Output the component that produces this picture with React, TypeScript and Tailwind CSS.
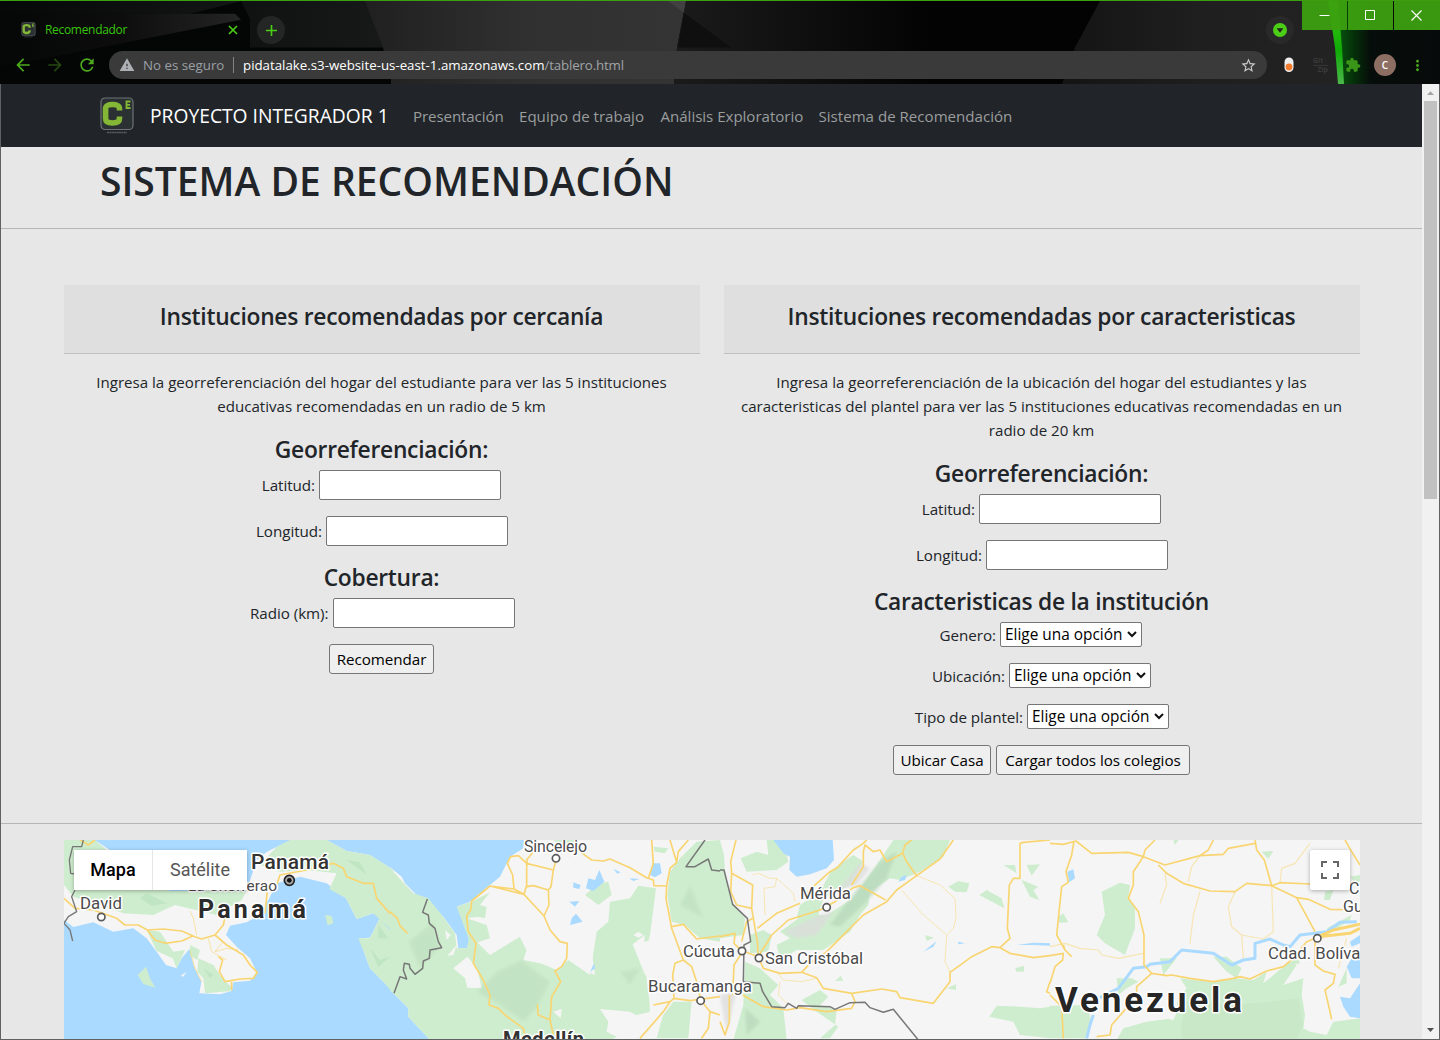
import React from "react";
import { MdArrowBack, MdArrowForward, MdRefresh, MdStarBorder, MdExtension, MdMoreVert, MdWarning, MdAdd } from "react-icons/md";

function Logo({ className }: { className: string }) {
  return (
    <svg viewBox="0 0 34 38" className={className}>
      <rect x="1" y="1" width="32" height="31.5" rx="4" fill="#2b3133" stroke="#6d7276" strokeWidth="1.2" />
      <path d="M19.500 13.500V11.500C19.500 9 17 7.500 12.500 7.500S5.600 9 5.600 11.500V21.500C5.600 24.500 8 26 12.500 26S19.500 24.500 19.500 21.500V19.500" fill="none" stroke="#83b735" strokeWidth="5.600" />
      <path d="M30.500 4.500H26.500V11H30.500M26.500 7.800H30" fill="none" stroke="#83b735" strokeWidth="1.800" />
      <path d="M7 35.500H27" stroke="#565b5f" strokeWidth="1.300" strokeDasharray="2 .4" />
    </svg>
  );
}

function Backdrop() {
  return (
    <svg className="absolute inset-0 h-full w-full" viewBox="0 0 1440 84" preserveAspectRatio="none">
      <defs>
        <linearGradient id="a" x1="0" x2="1"><stop offset="0" stopColor="#050606" /><stop offset=".5" stopColor="#0d0d0d" /><stop offset="1" stopColor="#242424" /></linearGradient>
        <linearGradient id="a2" x1="0" x2="1"><stop offset="0" stopColor="#060707" /><stop offset="1" stopColor="#141515" /></linearGradient>
        <linearGradient id="b" x1="0" x2="1"><stop offset="0" stopColor="#202020" /><stop offset=".5" stopColor="#303030" /><stop offset="1" stopColor="#343434" /></linearGradient>
        <linearGradient id="c" x1="0" x2="1"><stop offset="0" stopColor="#1b1b1b" /><stop offset=".6" stopColor="#020302" /><stop offset="1" stopColor="#020302" /></linearGradient>
        <linearGradient id="d" x1="0" x2="1"><stop offset="0" stopColor="#141414" /><stop offset=".5" stopColor="#1f1f1f" /><stop offset="1" stopColor="#232323" /></linearGradient>
        <linearGradient id="e" x1="0" x2="1"><stop offset="0" stopColor="#07570d" /><stop offset=".12" stopColor="#05380a" /><stop offset=".32" stopColor="#060d0a" /><stop offset="1" stopColor="#070a0a" /></linearGradient>
        <linearGradient id="f" x1="0" x2="0" y1="0" y2="1"><stop offset="0" stopColor="#3ecb12" /><stop offset=".6" stopColor="#10ab08" /><stop offset="1" stopColor="#4cb84a" /></linearGradient>
        <linearGradient id="g" x1="0" x2="1"><stop offset="0" stopColor="#101211" /><stop offset="1" stopColor="#171918" /></linearGradient>
      </defs>
      <rect width="1440" height="84" fill="#040505" />
      <path d="M0 0H242L190 13H0Z" fill="url(#a2)" />
      <path d="M0 13H235L241 19L0 67Z" fill="url(#a)" />
      <path d="M242 2V0H366L383 47H250V18Z" fill="url(#g)" />
      <path d="M365 0H686L677 47L674 84H391V79L383 47Z" fill="url(#b)" />
      <path d="M668 0H686L684 12Z" fill="#414141" />
      <path d="M686 0H1102V84H674L677 47Z" fill="url(#c)" />
      <path d="M684 12L731 47H678Z" fill="#0f0f0f" />
      <path d="M1100 0H1336L1342 84H1062L1075 47Z" fill="url(#d)" />
      <path d="M1338 0H1440V84H1342Z" fill="url(#e)" />
      <path d="M1328 0H1338L1342 47L1344 84H1338L1335 47Z" fill="url(#f)" />
    </svg>
  );
}

const winBtn = "flex h-[29px] items-center justify-center bg-[#3ca010]/95";

function Chrome() {
  return (
    <header className="relative h-[84px] shrink-0 overflow-hidden border-t border-[#3b9f10] bg-black">
      <Backdrop />
      <div className="relative flex h-[46px] items-start">
        <div className="flex h-[46px] w-[257px] items-center pt-[12px] pl-[21px]">
          <Logo className="h-4 w-[15px]" />
          <span className="ml-[9px] w-[183px] text-[12px] leading-4 tracking-[-0.31px] text-[#37c50b]">Recomendador</span>
          <svg viewBox="0 0 10 10" className="size-[10px]"><path d="M1 1L9 9M9 1L1 9" stroke="#4bcf16" strokeWidth="1.700" /></svg>
        </div>
        <div className="mt-[15px] flex size-7 items-center justify-center rounded-full bg-[#242525]">
          <MdAdd className="size-[19px] text-[#4bcf16]" />
        </div>
        <div className="grow" />
        <div className="mt-[15px] mr-[8px] flex size-7 items-center justify-center rounded-full bg-[#292929]">
          <svg viewBox="0 0 14 14" className="size-[14px]"><circle cx="7" cy="7" r="7" fill="#4bcf16" /><path d="M3.600 5.200H10.400L7 9.800Z" fill="#222" /></svg>
        </div>
        <div className="flex gap-px">
          <div className={winBtn + " w-[45px]"}><svg className="size-[11px]" viewBox="0 0 11 11"><path d="M0.500 5.500H10.500" stroke="#fff" /></svg></div>
          <div className={winBtn + " w-[45px]"}><svg className="size-[11px]" viewBox="0 0 11 11"><path d="M.5 .5H9.500V9.500H.5Z" fill="none" stroke="#fff" /></svg></div>
          <div className={winBtn + " w-[46px] pr-[2px]"}><svg className="size-[11px]" viewBox="0 0 11 11"><path d="M.5 .5L10.500 10.500M10.500 .5L.5 10.500" stroke="#fff" strokeWidth="1.200" /></svg></div>
        </div>
      </div>
      <div className="relative flex h-9 items-center pl-[13px] text-[#4bab1c]">
        <MdArrowBack className="size-5" />
        <MdArrowForward className="ml-3 size-5 text-[#24480f]" />
        <MdRefresh className="ml-3 size-5" />
        <div className="ml-[12px] flex h-7 w-[1158px] items-center rounded-full bg-[#3a3a3a] pr-[10px] pl-[10px] text-[13.300px] text-[#9aa0a6]">
          <MdWarning className="size-4 text-[#adb1b5]" />
          <span className="ml-2 w-[90px] pt-[2px] whitespace-nowrap">No es seguro</span>
          <span className="h-4 w-px bg-[#808386]" />
          <span className="ml-[9px] pt-[2px] tracking-[-0.01px] whitespace-nowrap text-white">pidatalake.s3-website-us-east-1.amazonaws.com<span className="tracking-[-0.15px] text-[#a0a4a8]">/tablero.html</span></span>
          <MdStarBorder className="ml-auto size-[17px] text-[#c8c9ca]" />
        </div>
        <svg viewBox="0 0 10 16" className="ml-[17px] h-4 w-[10px]"><rect x=".5" y=".5" width="9" height="14.500" rx="4.500" fill="#efefef" /><circle cx="5" cy="10" r="3.400" fill="#f47c2c" /></svg>
        <div className="ml-[19px] w-[15px] text-[7px] leading-[8px] font-bold text-[#3a3a3a]"><div className="border-b border-[#353535]">Git</div><div className="text-right">Zip</div></div>
        <MdExtension className="ml-[17px] size-4 text-[#3a9518]" />
        <div className="ml-[13px] flex size-[22px] items-center justify-center rounded-full bg-[#8d6e63] text-[10px] font-semibold text-white">C</div>
        <MdMoreVert className="ml-[13px] size-[17px]" />
      </div>
    </header>
  );
}

function NavBar() {
  return (
    <nav className="flex h-[63px] items-center bg-[#212529] pl-[99px] text-[15.100px] text-[#9b9d9f]">
      <Logo className="h-[38px] w-[34px]" />
      <span className="ml-[16px] w-[263px] pt-px text-[19.250px] whitespace-nowrap text-white">PROYECTO INTEGRADOR 1</span>
      <span className="w-[106px] tracking-[-0.1px] whitespace-nowrap">Presentación</span>
      <span className="w-[141.500px] whitespace-nowrap">Equipo de trabajo</span>
      <span className="w-[158px] tracking-[-0.03px] whitespace-nowrap">Análisis Exploratorio</span>
      <span className="whitespace-nowrap">Sistema de Recomendación</span>
    </nav>
  );
}

function Field({ label, w }: { label: string; w: string }) {
  return (
    <div className="mb-4 flex h-[30px] items-center justify-center gap-1">
      <label className={"flex justify-end text-[15.200px] tracking-[-0.05px] whitespace-nowrap " + w}>{label}</label>
      <input className="h-[30px] w-[182px] rounded-[2px] border border-[#767676] bg-white" />
    </div>
  );
}

function Choice({ label, w }: { label: string; w: string }) {
  return (
    <div className="mb-4 flex h-[25px] items-center justify-center gap-1 text-[15.200px]">
      <label className={"flex justify-end tracking-[-0.05px] whitespace-nowrap " + w}>{label}</label>
      <div className="flex h-[25px] w-[142px] items-center rounded-[2px] border border-[#767676] bg-white pl-1 text-black">
        <span className="w-[122px] pt-px text-left text-[15.400px] whitespace-nowrap">Elige una opción</span>
        <svg viewBox="0 0 10 7" className="mb-[1px] h-[7px] w-[10px]"><path d="M1 1L5 5L9 1" fill="none" stroke="#111" strokeWidth="2" /></svg>
      </div>
    </div>
  );
}

function Btn({ children, w }: { children: React.ReactNode; w: string }) {
  return <button className={"h-[30px] rounded-[3px] border border-[#767676] bg-[#efefef] text-[15.200px] tracking-[-0.05px] whitespace-nowrap text-black " + w}>{children}</button>;
}

function Heading({ children }: { children: React.ReactNode }) {
  return <h4 className="h-9 text-[22.800px] leading-[32px] font-semibold tracking-[-0.27px] whitespace-nowrap">{children}</h4>;
}

function Card({ title, children }: { title: string; children: React.ReactNode }) {
  return (
    <section className="w-[636px] text-center">
      <h4 className="mb-4 h-[69px] border-b border-[#c0c0c0] bg-[#dfdfdf] pr-px text-[22.800px] leading-[64px] font-semibold tracking-[-0.27px] whitespace-nowrap">{title}</h4>
      <div className="pr-px">{children}</div>
    </section>
  );
}

const water = "#aadaff";
const green = "#ceedce";
const deep = "#c0e5c2";
const white = "#f5f5f5";
const road = "#f9d571";

function Town({ x, y }: { x: number; y: number }) {
  return <circle cx={x} cy={y} r="11" fill="#fff" stroke="#5a5a5a" strokeWidth="5" />;
}

function MapDrawing() {
  return (
    <svg viewBox="0 0 1296 199" className="block h-[199px] w-[1296px]" fontFamily="Roboto, sans-serif" strokeLinejoin="round">
      <defs><filter id="soft" x="-10%" y="-10%" width="120%" height="120%"><feGaussianBlur stdDeviation="5" /></filter></defs>
      <rect width="1296" height="199" fill={white} />
      <g transform="translate(-4 -5) scale(.33333)">
        <path d="M12 0H1400L1392 15L1390 40L1350 65L1320 125L1290 150L1230 200L1190 215L1215 230L1228 300L1225 340L1195 340L1190 300L1150 245L1100 190L1070 180L1035 145L1025 125L990 97L990 465L1045 520L1045 545L1110 615H12Z" fill={water} />
        <path d="M12 15H105L150 45L250 120L330 168L400 168L470 150L560 165L590 75L620 50L690 15H800L860 48L930 60L1000 105V470L970 440L930 400L915 360L900 310L930 308L958 252L990 290V265L940 235L890 252L858 190L800 145L720 125L650 145L628 190L600 240L560 262L510 272L498 300L530 335L570 370L592 415L570 437L520 442L515 468L480 478L418 475L424 440L402 395L388 342L365 370L350 400L318 390L290 350L260 310L220 280L160 290L100 262L40 276L12 255Z" fill={white} />
        <path d="M12 15H105L240 130L330 168H560L545 195L470 240L345 210L280 240L190 235L120 210L40 185L12 150ZM600 90L650 35L690 15H800L860 48L930 60L1000 105V290L958 252L940 235L890 252L858 190L808 162L830 115L740 105L660 110ZM895 310H930L958 252L1000 295V475L970 440L930 400L915 360ZM260 285L300 290L320 320L340 350L375 345L350 400L338 370L290 348ZM415 370L460 390L490 435L515 455V468L435 475L430 430L412 410ZM233 420L258 395L270 430L286 458L250 447ZM795 240L815 243L820 265L803 271ZM390 330L420 345L412 375L390 362Z" fill={green} />
        <path d="M240 190L260 175L320 205L275 212ZM930 340L960 375L990 365L955 396ZM955 270L985 310L955 310ZM860 75L900 82L920 120ZM60 95L100 125L95 160L70 150ZM430 400L460 420L450 430Z" fill={deep} />
        <path d="M105 15L150 45L250 120L330 168L400 168L470 150L560 165L590 75L620 50L690 15Z" fill={water} />
        <path d="M600 110L640 95L640 130L615 165L575 165Z" fill={white} />
        <path d="M362 422L380 410L370 425Z" fill={white} />
        <g fill="none" stroke={road} strokeWidth="5">
          <path d="M12 190L45 220L100 225L170 250L195 270L235 270L262 285L310 282L365 288L405 305L425 312L465 300L490 270L496 240M262 285L285 315L315 325L365 318L400 302M465 300L500 330L550 360L570 390L592 412L580 430L540 432L495 440L478 410L488 375L475 365M515 440V465M60 15L85 30L105 15M650 150L660 120L740 105L790 90L820 85L850 100L860 125L910 145L940 145L950 190L990 235L1010 260L1042 295M615 235L622 165" />
          <path d="M390 228L400 250L410 300M390 345L405 400L425 440M445 310L455 350L500 375M485 325L465 350L500 340L535 345" strokeWidth="3" opacity=".6" />
        </g>
        <path d="M70 15L65 35H38L28 75L32 115L60 120M45 165L35 185L50 230L25 245L12 265L30 285L38 318" fill="none" stroke="#777" strokeWidth="4" />
      </g>
      <g transform="translate(326 -5) scale(.33333)">
        <path d="M0 100L70 175L115 190L155 240L195 295L200 340H230L240 300L300 360L390 305L410 345L430 375L500 405L535 375L600 420L620 290L655 260L660 200L720 190L745 152L798 160L780 300L762 370L778 495L780 530L700 550L715 590L660 615H120L55 545V520L0 465Z" fill={green} />
        <path d="M230 250L290 270L300 310L350 315L390 305L410 345L400 375L450 385L500 400L535 370L565 380L575 400L615 420L605 350L618 290L580 370H535V320L470 250L410 180L300 150L225 215Z" fill={white} />
        <path d="M200 215L245 200L300 172L270 210L290 215L285 250L262 245L230 250L290 270L300 310L240 330L232 300Z M585 180L620 148L655 140L665 180L625 210ZM490 15H560L530 40ZM790 35L835 40L825 55L795 50ZM840 110L870 70L920 20L990 15V320L930 310L885 270L845 260L832 180ZM850 500H905L895 610H770L820 540Z" fill={green} />
        <path d="M165 285L182 300L170 315ZM172 362L200 330L190 360ZM190 400L232 365L262 400L275 460L232 458L225 430ZM630 522L720 530L765 555L830 500L800 610H690L650 590L655 560ZM490 530L515 522L512 550ZM728 328L765 300L762 320L800 312V420H765ZM730 300L745 290L760 300L745 308Z" fill={white} />
        <path d="M550 142L572 150L568 162L550 158ZM588 160L595 130L615 135L628 105L643 140L610 168ZM635 105L660 88L645 98ZM670 102L692 112L682 116ZM718 130L748 132L730 138ZM538 200L568 198L555 215ZM540 270L545 250L558 236L578 260ZM780 120L788 85H810L815 115L795 127ZM600 412L612 385L615 400Z" fill={water} />
        <g fill="#bddfbe" filter="url(#soft)" opacity=".6"><path d="M260 470L320 410L395 375L480 440L440 520L400 560L330 510ZM55 320L130 260L150 340L90 400ZM690 410L750 400L720 450ZM870 210L900 150L940 250Z" /></g>
        <g fill="none" stroke={road} strokeWidth="5">
          <path d="M402 178L300 153L245 198L242 225L230 242L235 290L258 325L250 385L280 435L300 480L297 510L325 520L345 540L400 580L405 600M300 153L372 162L402 178L462 243L480 285L510 320L532 325L530 370L515 395L495 408L512 440L485 485L480 555L490 600M372 162L368 120L352 85L362 65L385 62L410 85L490 105L483 155L475 165L477 210L462 243M410 85V150L402 178M410 155L430 152L475 165M490 105L497 80M430 50L410 75L412 90M570 50L605 75L640 78L660 72L720 98L770 128L790 135L792 152L830 153L840 100L860 82L840 15M860 82L865 50L895 15M775 130L790 85L785 15M830 153L828 190L845 280L880 375L905 395L920 440L932 495L960 530L955 580L935 610M845 275L880 268L920 312L990 303M880 375L855 385L848 420L852 490L840 500L790 510M852 490L900 497L990 485M840 500L820 530L750 610M480 555L445 540L442 508M0 230L22 250L30 272L52 295M960 530L990 540" />
        </g>
        <path d="M112 192L98 232L115 240L118 265L135 280L145 320L155 338L120 345L118 370L100 378L98 400L75 418L60 400L58 388L43 385L40 405L50 432L30 425L12 475M945 15L888 95H915L955 72L965 105L990 108" fill="none" stroke="#777" strokeWidth="4.500" />
      </g>
      <g transform="translate(656 -5) scale(.33333)">
        <path d="M0 15L12 60L15 110L35 200L75 250L70 300L0 310ZM62 70L110 50L145 60L140 15H190L205 80L170 105L80 110ZM90 300L130 285L155 300L145 350L90 355ZM75 380L120 400L175 450L150 480L190 520L200 615H40L70 510ZM335 105L400 60L430 80L390 150L310 190L295 240L230 250L240 210L300 170ZM520 15H690L670 65L600 110L540 135L510 130L450 170L445 210L420 240L390 290L310 345L230 345L180 375L170 330L210 310L180 290L250 240L320 240L400 190L470 90ZM685 155L715 138L748 145L740 172L705 170ZM778 180L800 165L845 190L853 220ZM850 90H885L890 115ZM920 90L960 88L935 122ZM905 135L955 155L940 165L958 195L930 185ZM245 495L300 465L325 485L300 510L350 525L345 570L300 610H330L355 575L290 530ZM615 300L642 308L620 318ZM345 438L362 422L370 437ZM885 400L912 392V410H890ZM680 460L708 448V465ZM808 545L830 512L900 515L960 520L990 515V610L900 600L880 560Z" fill={green} />
        <g filter="url(#soft)" opacity=".75"><path d="M330 270L390 190L480 80L530 50L500 130L430 210L360 275Z" fill="#b8d8bc" /><path d="M190 290L300 240L340 230L290 300L230 310ZM350 170L420 85L450 100L410 150ZM0 480L50 470L20 590Z" fill="#dcdcdc" /><path d="M75 520L120 560L80 600Z" fill="#b8d8bc" /></g>
        <path d="M160 15H338L342 75L320 100L270 118L230 125L208 105L210 65L190 55ZM535 140L545 125L560 120L555 135ZM610 350L650 318L640 335ZM890 330L940 323L990 325V332L940 330ZM715 320L735 325L715 328Z" fill={water} />
        <g fill="none" stroke={road} strokeWidth="5">
          <path d="M48 15L32 80L35 115L98 150L95 220L112 320L115 365L130 400L180 415L245 412L290 428L310 460L395 475L485 462L530 470L540 488L640 505L690 440V412L735 380L755 365L815 335L840 338L870 310L862 280L868 150L880 130H900V25L910 22L990 15M35 115L32 170L50 210L95 220M112 280L170 235L240 205M240 190L330 110L350 100L400 45L430 25L440 15M115 365L155 300L205 255L300 225L345 200L400 158L420 152L497 195M395 150L430 95V50L435 30L460 50L480 45L500 80L548 55L560 80L590 122L660 72L700 15M548 55L555 30L575 15M590 122L530 165L500 200L430 240L360 310L320 350L270 385L245 412M840 338L870 355L940 368L990 362M75 350L115 365M0 305L45 295L42 325L68 350M68 350L42 390L38 480M68 480L130 515L200 525L240 518L320 530L395 520L405 500L395 475M28 480V560L15 600L0 560M990 440L980 470L990 475M98 250L80 260L65 320" />
          <path d="M590 122L660 150L705 190L708 250L700 280L680 300L675 380L690 412M545 165L610 240L680 300M135 240L132 160L165 155L170 130L220 175L225 200M98 120L115 115L150 130H170M245 440L190 435L170 410M180 440L175 480L205 510M245 440L290 430" strokeWidth="3" opacity=".5" />
        </g>
        <path d="M0 105H12L38 208L82 250L92 320L72 330L70 440L120 445L128 470L155 515L195 518L205 505L230 520L235 512L330 515L345 523L390 503L435 502L450 518L490 532L520 523L595 615" fill="none" stroke="#777" strokeWidth="4.500" />
      </g>
      <g transform="translate(986 -5) scale(.33333)">
        <path d="M155 170L210 143L240 150L235 190L255 215V280L225 360L165 325L140 300L165 240ZM25 245L40 235L55 262L28 263ZM0 512L110 510L125 560L110 610H0ZM390 430L480 440L560 430L610 435L650 410L640 445L695 400L715 380L740 390L700 450L760 430L755 480L765 540L760 580L780 590L830 600L850 560L930 550V615H200L220 580L290 560L370 550L385 490L410 460ZM200 430L245 430L265 440L230 460L205 480ZM330 370L380 370L340 420ZM490 365L530 365L575 400L560 430L530 410ZM635 50L670 48L655 72ZM825 170L850 165L840 195L822 195ZM865 455L890 400V445ZM900 125L930 120V160ZM830 280L905 240L900 255L845 290ZM370 15H385L375 30ZM735 350L750 385L720 390Z" fill={green} />
        <path d="M395 560L410 500L560 510L745 490L760 570L740 615H395Z" fill="#c8e8c8" />
        <path d="M290 540L330 500L390 510L370 555ZM780 560L830 520V550L800 570Z" fill={white} />
        <g fill="none" stroke={water} strokeWidth="9"><path d="M130 540L120 570L110 610M150 488L205 460L250 400L290 395L300 388L360 380L395 345L490 355L545 390L580 375L615 370V325L660 312L700 330L720 335L750 300L795 295L830 290L870 262L920 260" /></g>
        <path d="M52 110L70 103L75 130L58 142ZM930 445L900 490L870 485L880 515L900 545L930 550ZM890 395L905 370L930 370V430L905 430ZM900 320L930 300V325L905 335Z" fill={water} />
        <g fill="none" stroke={road} strokeWidth="5">
          <path d="M0 25L40 28L78 18L125 55L235 52L280 65L345 90L450 62L520 58L535 40L615 25M280 65L285 45L315 15M280 65L250 110V150L235 190L265 230L282 300V390L305 415L350 422L365 420L420 430L490 440L550 430L570 425L600 432L650 408L700 395L730 370L770 320L800 308M325 90L350 115L400 145L480 168L555 170L590 145L665 152L690 143L780 147M615 15L620 45L643 75L665 152L740 188L795 290M740 188L775 193L840 223L930 225M795 320V390L820 408L855 418L850 445L825 465L840 530L845 553M72 18L65 60L48 110L55 142L35 155L20 300L45 345L65 365M0 362L40 355L38 375L15 395L0 445M45 345L40 330M305 415L260 455V475L220 530L185 570L180 600L140 605M0 480L35 515L40 610M450 62L475 45L490 15M885 15L905 50L930 90" />
          <path d="M805 305L850 285L930 268M805 305L900 295L930 280" strokeWidth="9" />
          <path d="M345 115L350 150L330 205M450 170L430 240L420 325M555 170L535 215L545 275L575 300L580 370M575 300L640 312L670 290L665 152M0 335L45 325L90 340L145 345L155 360L205 370L280 355M690 143L695 100L735 85L780 25M415 140L425 95L450 62M865 400L890 310" strokeWidth="3.500" opacity=".5" />
        </g>
      </g>
      <g transform="translate(-64 -840)" fill="#4b4b4b" stroke="#fff" strokeWidth="3" paintOrder="stroke" fontWeight="400" fontSize="16.800">
        <text x="188" y="891" fontSize="15.500" textLength="89">La Chorrerao</text>
        <text x="251" y="869" fontSize="21" fontWeight="500" fill="#333" textLength="78">Panamá</text>
        <text x="80" y="908.500" textLength="42">David</text>
        <text x="198" y="918" fontSize="25" fontWeight="700" fill="#2b2b2b" textLength="108">Panamá</text>
        <text x="524" y="852" fontSize="16" textLength="63">Sincelejo</text>
        <text x="800" y="898.500" textLength="51">Mérida</text>
        <text x="683" y="956.500" textLength="52">Cúcuta</text>
        <text x="765" y="963.500" textLength="98">San Cristóbal</text>
        <text x="648" y="992" textLength="104">Bucaramanga</text>
        <text x="503" y="1046" fontSize="20" fontWeight="700" fill="#333" textLength="81">Medellín</text>
        <text x="1055" y="1012" fontSize="35" fontWeight="700" fill="#262626" textLength="187">Venezuela</text>
        <text x="1268" y="958.500" textLength="98">Cdad. Bolívar</text>
        <text x="1349" y="894" fontSize="16">Ciudad</text>
        <text x="1343" y="911.500" fontSize="16">Guayana</text>
      </g>
      <g transform="translate(-64 -840) scale(.33333)">
        <Town x={304} y={2751} /><Town x={1668} y={2575} /><Town x={2480} y={2722} /><Town x={2226} y={2853} /><Town x={2277} y={2874} /><Town x={2102} y={3002} /><Town x={3952} y={2815} />
        <circle cx="868" cy="2641" r="15" fill="#aaa" stroke="#222" strokeWidth="5" /><circle cx="868" cy="2641" r="7" fill="#111" />
      </g>
    </svg>
  );
}

function MapPanel() {
  return (
    <section className="relative ml-[63px] h-[199px] w-[1296px] overflow-hidden">
      <MapDrawing />
      <div className="absolute top-[10px] left-[10px] flex h-10 w-[173px] bg-white font-[Roboto] text-[18px] shadow-[0_1px_4px_rgba(0,0,0,0.3)]">
        <div className="flex w-[79px] items-center justify-center border-r border-[#e6e6e6] font-medium text-black">Mapa</div>
        <div className="flex grow items-center justify-center text-[#565656]">Satélite</div>
      </div>
      <div className="absolute top-[10px] right-[10px] flex size-10 items-center justify-center rounded-[2px] bg-white shadow-[0_1px_4px_rgba(0,0,0,0.3)]">
        <svg viewBox="0 0 18 18" className="size-[18px]"><path d="M1 6V1H6M12 1H17V6M17 12V17H12M6 17H1V12" fill="none" stroke="#666" strokeWidth="2" /></svg>
      </div>
    </section>
  );
}

export default function App() {
  return (
    <div className="flex h-[1040px] w-[1440px] flex-col overflow-hidden bg-[#e7e7e7] font-['Open_Sans',sans-serif] text-[#212529]">
      <Chrome />
      <div className="flex h-[956px] border-x border-b border-[#5f6163]">
        <main className="w-[1421px] overflow-hidden text-[15.100px] leading-6">
          <NavBar />
          <h1 className="h-[81px] pl-[99px] text-[39px] leading-[68px] font-semibold whitespace-nowrap">SISTEMA DE RECOMENDACIÓN</h1>
          <div className="h-px bg-[#b5b6b6]" />
          <div className="mt-[56px] flex h-[538px] gap-6 pl-[63px]">
            <Card title="Instituciones recomendadas por cercanía">
              <p className="mb-4">Ingresa la georreferenciación del hogar del estudiante para ver las 5 instituciones<br />educativas recomendadas en un radio de 5 km</p>
              <Heading>Georreferenciación:</Heading>
              <Field label="Latitud:" w="w-[53px]" />
              <Field label="Longitud:" w="w-[67px]" />
              <Heading>Cobertura:</Heading>
              <Field label="Radio (km):" w="w-[80px]" />
              <Btn w="w-[105px]">Recomendar</Btn>
            </Card>
            <Card title="Instituciones recomendadas por caracteristicas">
              <p className="mb-4">Ingresa la georreferenciación de la ubicación del hogar del estudiantes y las<br />caracteristicas del plantel para ver las 5 instituciones educativas recomendadas en un<br />radio de 20 km</p>
              <Heading>Georreferenciación:</Heading>
              <Field label="Latitud:" w="w-[53px]" />
              <Field label="Longitud:" w="w-[67px]" />
              <Heading>Caracteristicas de la institución</Heading>
              <Choice label="Genero:" w="w-[55px]" />
              <Choice label="Ubicación:" w="w-[73px]" />
              <Choice label="Tipo de plantel:" w="w-[109px]" />
              <div className="flex justify-center gap-[5px]"><Btn w="w-[98px]">Ubicar Casa</Btn><Btn w="w-[194px]">Cargar todos los colegios</Btn></div>
            </Card>
          </div>
          <div className="mb-4 h-px bg-[#b5b6b6]" />
          <MapPanel />
        </main>
        <aside className="flex w-[17px] flex-col items-center bg-[#f1f1f1]">
          <svg viewBox="0 0 17 17" className="size-[17px] shrink-0"><path d="M5 11H12L8.500 7.200Z" fill="#a3a3a3" /></svg>
          <div className="h-[398px] w-[13px] bg-[#c1c1c1]" />
          <div className="grow" />
          <svg viewBox="0 0 17 17" className="size-[17px] shrink-0"><path d="M5 6H12L8.500 10Z" fill="#505050" /></svg>
        </aside>
      </div>
    </div>
  );
}
